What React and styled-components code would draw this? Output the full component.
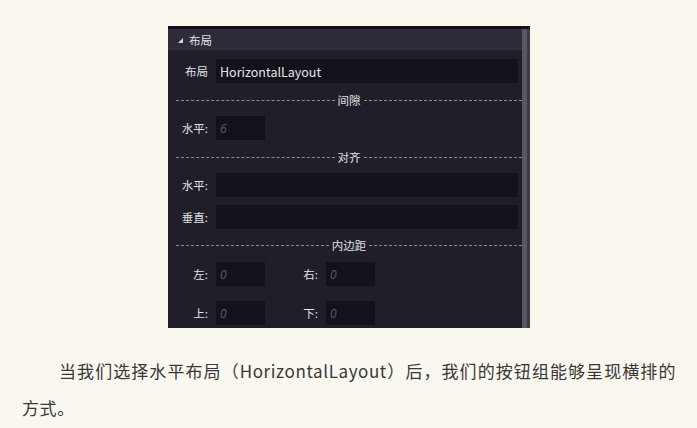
import React from 'react'
import styled, { createGlobalStyle } from 'styled-components'

const GlobalStyle = createGlobalStyle`
  html, body {
    margin: 0;
    padding: 0;
    background: #faf7ee;
  }
  body {
    font-family: "Noto Sans CJK SC", "Noto Sans", sans-serif;
  }
`

const Page = styled.div`
  display: flex;
  flex-direction: column;
  padding-top: 26px;
`

const Panel = styled.div`
  display: flex;
  margin-left: 168px;
  width: 362px;
  height: 302px;
  overflow: hidden;
  background: #1f1e29;
  border-top: 3px solid #121117;
  box-sizing: border-box;
`

const Content = styled.div`
  flex: 1;
  display: flex;
  flex-direction: column;
  min-width: 0;
`

const Scrollbar = styled.div`
  width: 8px;
  background: #3d3c45;
  display: flex;
`

const Thumb = styled.div`
  width: 5px;
  background: #595861;
`

const Header = styled.div`
  display: flex;
  align-items: center;
  gap: 6px;
  height: 21px;
  padding-left: 10px;
  background: #2d2c38;
  color: #e4e4e8;
  font-size: 11.5px;
`

const Triangle = styled.span`
  width: 0;
  height: 0;
  border-left: 5px solid transparent;
  border-bottom: 5px solid #d8d8dc;
  margin-top: 1px;
`

const Body = styled.div`
  display: flex;
  flex-direction: column;
  padding-right: 4px;
`

const Row = styled.div`
  display: flex;
  align-items: center;
  gap: 8px;
  margin-top: ${p => p.$top}px;
`

const Label = styled.span`
  width: ${p => p.$w || 40}px;
  text-align: right;
  flex-shrink: 0;
  color: #e2e2e6;
  font-size: 11.5px;
`

const Input = styled.div`
  display: flex;
  align-items: center;
  height: 24px;
  width: ${p => (p.$w ? `${p.$w}px` : 'auto')};
  flex: ${p => (p.$w ? 'none' : 1)};
  background: #13121a;
  padding-left: 4px;
  box-sizing: border-box;
  color: #e6e6ea;
  font-size: 12.5px;
`

const Placeholder = styled.span`
  font-style: italic;
  color: #5e5d66;
  font-size: 12px;
  font-family: "Open Sans", sans-serif;
`

const Divider = styled.div`
  display: flex;
  align-items: center;
  height: 16px;
  margin-top: ${p => p.$top}px;
  padding-left: 8px;
  margin-right: -4px;
  &::before, &::after {
    content: '';
    flex: 1;
    border-top: 1px dashed #8e8d96;
  }
`

const DividerText = styled.span`
  padding: 0 3px;
  color: #e0e0e4;
  font-size: 11.5px;
`

const PairRow = styled.div`
  display: flex;
  gap: 13px;
  margin-top: ${p => p.$top}px;
`

const Paragraph = styled.p`
  margin: 24px 21px 0 22px;
  font-size: 17px;
  line-height: 37px;
  letter-spacing: 0.6px;
  text-indent: 37px;
  text-align: justify;
  color: #383838;
  font-family: "Noto Sans CJK SC", sans-serif;
`

function Pair ({ label, value, labelWidth }) {
  return (
    <Row $top={0}>
      <Label $w={labelWidth}>{label}</Label>
      <Input $w={49}><Placeholder>{value}</Placeholder></Input>
    </Row>
  )
}

export default function App () {
  return (
    <Page>
      <GlobalStyle />
      <Panel>
        <Content>
          <Header>
            <Triangle />
            <span>布局</span>
          </Header>
          <Body>
            <Row $top={9}>
              <Label>布局</Label>
              <Input>HorizontalLayout</Input>
            </Row>
            <Divider $top={9}><DividerText>间隙</DividerText></Divider>
            <Row $top={8}>
              <Label>水平:</Label>
              <Input $w={49}><Placeholder>6</Placeholder></Input>
            </Row>
            <Divider $top={9}><DividerText>对齐</DividerText></Divider>
            <Row $top={8}>
              <Label>水平:</Label>
              <Input />
            </Row>
            <Row $top={8}>
              <Label>垂直:</Label>
              <Input />
            </Row>
            <Divider $top={8}><DividerText>内边距</DividerText></Divider>
            <PairRow $top={9}>
              <Pair label='左:' value='0' />
              <Pair label='右:' value='0' />
            </PairRow>
            <PairRow $top={15}>
              <Pair label='上:' value='0' />
              <Pair label='下:' value='0' />
            </PairRow>
          </Body>
        </Content>
        <Scrollbar><Thumb /></Scrollbar>
      </Panel>
      <Paragraph>
        当我们选择水平布局（HorizontalLayout）后，我们的按钮组能够呈现横排的方式。
      </Paragraph>
    </Page>
  )
}
